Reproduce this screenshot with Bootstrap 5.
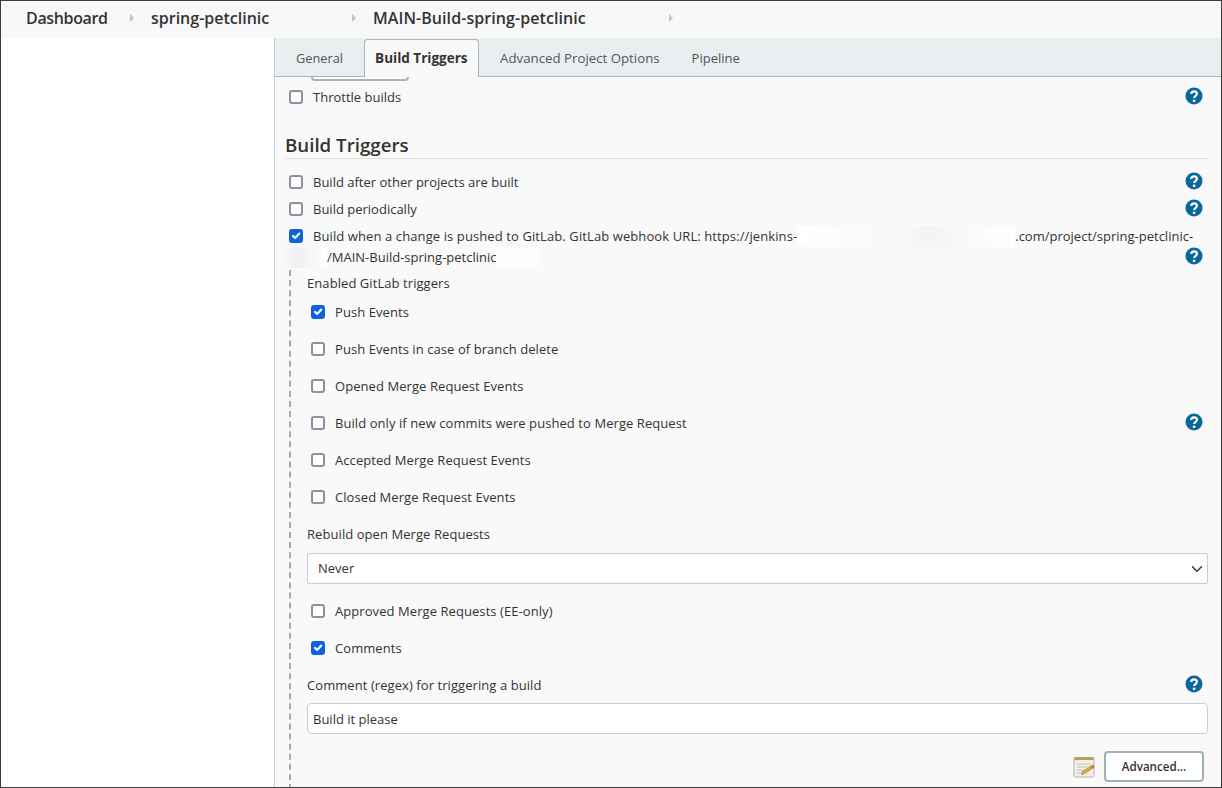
<!doctype html>
<html lang="en"><head><meta charset="utf-8"><title>Jenkins</title>
<link href="https://cdn.jsdelivr.net/npm/bootstrap@5.3.0/dist/css/bootstrap.min.css" rel="stylesheet">
<style>
html,body{height:100%;overflow:hidden}
body{font-family:"Open Sans","Noto Sans",sans-serif;font-size:13px;color:#333;background:#fff}
.win{height:788px;border:1px solid #3c3c3c;display:flex;flex-direction:column;overflow:hidden}
.crumbs{height:37px;background:#f8f8f8;flex:none;font-weight:600;font-size:16px;color:#333;padding-bottom:3px}
.crumb{display:block;white-space:nowrap}
.c1{padding-left:25px;box-sizing:content-box;width:82px;letter-spacing:-.35px}
.c2{width:201px}.c3{width:296px;letter-spacing:.07px}
.sep{flex:none;width:0;height:0;border-left:4px solid #c4c4c4;border-top:4px solid transparent;border-bottom:4px solid transparent;margin-top:-1px}
.s1{margin-right:17px;margin-left:22px}
.s2{margin-right:17px}
.main{flex:1;min-height:0}
.side{width:274px;flex:none;border-right:1px solid #c8ccce;background:#fff}
.pane{flex:1;min-width:0;background:#f9f9f9;display:flex;flex-direction:column}
.tabsbar{height:39px;background:#e9eef1;border-bottom:1px solid #a8b4bc;flex:none;padding-left:10px;align-items:flex-end}
.tabitem{height:38px;line-height:36px;padding:0 10px;color:#555;margin-bottom:-1px;border:1px solid transparent;border-bottom:0;font-size:13px;white-space:nowrap}
.tabitem.on{background:#f9f9f9;border-color:#a8b4bc;border-radius:4px 4px 0 0;font-weight:700;color:#333;font-size:13.5px;width:115px}
.gen{margin-right:10px;font-size:12.8px}
.adv{margin-left:10px;margin-right:10px;font-size:13.25px}
.form-area{flex:1;min-height:0;overflow:hidden;padding:0 13px 0 10px;position:relative}
.cutbtn{width:98px;height:4px;margin-left:26px;border:2px solid #a8b4bc;border-top:0;border-radius:0 0 4px 4px;background:#fff}
.rowline{display:flex;align-items:center;white-space:nowrap}
.h27{height:27px}
.h37{height:37px}
.first{margin-top:3px}
.form-check-input.cb{width:14px;height:14px;margin:-2px 10px 0 4px;flex:none;border:2px solid #8f8f9d;border-radius:3px;background-color:#fff}
.form-check-input.cb:checked{background-color:#0d63dc;border-color:#0d63dc;background-size:12px;background-image:url("data:image/svg+xml,%3csvg xmlns='http://www.w3.org/2000/svg' viewBox='0 0 20 20'%3e%3cpath fill='none' stroke='%23fff' stroke-linecap='round' stroke-linejoin='round' stroke-width='3.6' d='m5 10 3.5 3.5L15.5 6'/%3e%3c/svg%3e")}
.lbl{flex:1;min-width:0}
.hlp{flex:none;width:18px;height:18px;display:block;margin-right:5px}
.rowline .hlp{margin-top:-4px}
.ttl{font-size:18.7px;font-weight:600;color:#333;border-bottom:1px solid #ddd;height:27px;line-height:25px;margin-top:21px;margin-bottom:10px}
.wrapline{height:47px;position:relative;line-height:21px;padding:3px 28px 0 28px;white-space:nowrap}
.wrapline .form-check-input.cb{position:absolute;left:0;top:6px;margin-top:0}
.wrapline .hlp{position:absolute;right:0;top:24px}
.spaced{letter-spacing:.1px}
.blur1{display:inline-block;width:218px;height:21px;vertical-align:top;background:linear-gradient(90deg,#fff,#f6f6f6 55%,#f3f3f3 60%,#fafafa 80%,#fff)}
.blur2{display:inline-block;width:14px;height:21px;vertical-align:top;position:relative}
.blur2::before{content:"";position:absolute;right:0;top:0;width:46px;height:21px;background:linear-gradient(90deg,#f9f9f9,#eef0f3 40%,#fff)}
.blur3{display:inline-block;width:45px;height:21px;vertical-align:top;background:#fcfcfc}
.sub{margin-left:4px;border-left:2px dashed #a9a9a9;padding-left:16px;height:520px;letter-spacing:.07px}
.fld{height:24px;line-height:26px;white-space:nowrap}
.gap5{margin-top:5px}
.form-select.sel{height:31px;border-radius:2px;border:1px solid #ccc;font-size:13px;padding:1px 10px 0;color:#333;background-position:right 4px center;background-size:12px;margin-top:8px}
.form-control.inp{height:31px;margin-top:-1px;border-radius:4px;border:1px solid #ccc;font-size:13px;padding:0 5px;color:#333}
.gap8{margin-top:9px}
.bar-end{margin-top:17px;margin-right:4px;gap:8px}
.advbtn{width:100px;height:31px;border:2px solid #9fb0bb;border-radius:4px;background:#fff;color:#333;font-weight:600;font-size:11.6px;padding:0;letter-spacing:0}
.note{width:24px;height:24px;display:block}
</style></head><body>
<div class="win">
 <div class="crumbs d-flex align-items-center">
  <span class="crumb c1">Dashboard</span><span class="sep s1"></span>
  <span class="crumb c2">spring-petclinic</span><span class="sep s2"></span>
  <span class="crumb c3">MAIN-Build-spring-petclinic</span><span class="sep"></span>
 </div>
 <div class="main d-flex">
  <div class="side"></div>
  <div class="pane">
   <div class="tabsbar d-flex">
    <div class="tabitem gen">General</div>
    <div class="tabitem on">Build Triggers</div>
    <div class="tabitem adv">Advanced Project Options</div>
    <div class="tabitem">Pipeline</div>
   </div>
   <div class="form-area">
    <div class="cutbtn"></div>
    <div class="rowline h27 first"><input class="form-check-input cb" type="checkbox"><span class="lbl">Throttle builds</span>
     <svg class="hlp" viewBox="0 0 18 18"><use href="#q"/></svg></div>
    <div class="ttl">Build Triggers</div>
    <div class="rowline h27"><input class="form-check-input cb" type="checkbox"><span class="lbl">Build after other projects are built</span><svg class="hlp" viewBox="0 0 18 18"><use href="#q"/></svg></div>
    <div class="rowline h27"><input class="form-check-input cb" type="checkbox"><span class="lbl">Build periodically</span><svg class="hlp" viewBox="0 0 18 18"><use href="#q"/></svg></div>
    <div class="wrapline"><input class="form-check-input cb" type="checkbox" checked><span class="spaced">Build when a change is pushed to GitLab. GitLab webhook URL: https://jenkins-</span><span class="blur1"></span>.com/project/spring-petclinic-<br><span class="blur2"></span>/MAIN-Build-spring-petclinic<span class="blur3"></span><svg class="hlp" viewBox="0 0 18 18"><use href="#q"/></svg></div>
    <div class="sub">
     <div class="fld">Enabled GitLab triggers</div>
     <div class="rowline h37"><input class="form-check-input cb" type="checkbox" checked><span class="lbl">Push Events</span></div>
     <div class="rowline h37"><input class="form-check-input cb" type="checkbox"><span class="lbl">Push Events in case of branch delete</span></div>
     <div class="rowline h37"><input class="form-check-input cb" type="checkbox"><span class="lbl">Opened Merge Request Events</span></div>
     <div class="rowline h37"><input class="form-check-input cb" type="checkbox"><span class="lbl">Build only if new commits were pushed to Merge Request</span><svg class="hlp" viewBox="0 0 18 18"><use href="#q"/></svg></div>
     <div class="rowline h37"><input class="form-check-input cb" type="checkbox"><span class="lbl">Accepted Merge Request Events</span></div>
     <div class="rowline h37"><input class="form-check-input cb" type="checkbox"><span class="lbl">Closed Merge Request Events</span></div>
     <div class="fld gap5">Rebuild open Merge Requests</div>
     <select class="form-select sel"><option>Never</option></select>
     <div class="rowline h37 gap8"><input class="form-check-input cb" type="checkbox"><span class="lbl">Approved Merge Requests (EE-only)</span></div>
     <div class="rowline h37"><input class="form-check-input cb" type="checkbox" checked><span class="lbl">Comments</span></div>
     <div class="rowline h37"><span class="lbl">Comment (regex) for triggering a build</span><svg class="hlp" viewBox="0 0 18 18"><use href="#q"/></svg></div>
     <input class="form-control inp" type="text" value="Build it please">
     <div class="d-flex justify-content-end align-items-center bar-end">
      <svg class="note" viewBox="0 0 24 24"><rect x="2" y="3" width="20" height="19" rx="1" fill="#efeee8" stroke="#b5b3a8"/><rect x="2.500" y="2" width="19" height="3" fill="#b3a25a"/><path d="M5 9h13M5 12h10M5 15h7M5 18h5" stroke="#c2c2ba"/><path d="M9.500 19.500l1-3 8.500-5.500 1.800 2.300-8.500 5.500z" fill="#e3a93c" stroke="#8c6420" stroke-width=".5"/><path d="M19 11l1.800 2.300 1.700-1.200-1.700-2.300z" fill="#d9534f"/></svg>
      <button class="btn advbtn" type="button">Advanced...</button>
     </div>
    </div>
   </div>
  </div>
 </div>
</div>
<svg width="0" height="0" class="position-absolute"><defs><g id="q"><circle cx="9" cy="9" r="8.5" fill="#0b669e"/><path d="M6.200 7.100c0-1.700 1.200-2.700 2.900-2.700s2.800 1 2.800 2.400c0 2.200-2.800 2.200-2.800 4.200" fill="none" stroke="#fff" stroke-width="2.200"/><circle cx="9.100" cy="13.800" r="1.400" fill="#fff"/></g></defs></svg>
</body></html>
